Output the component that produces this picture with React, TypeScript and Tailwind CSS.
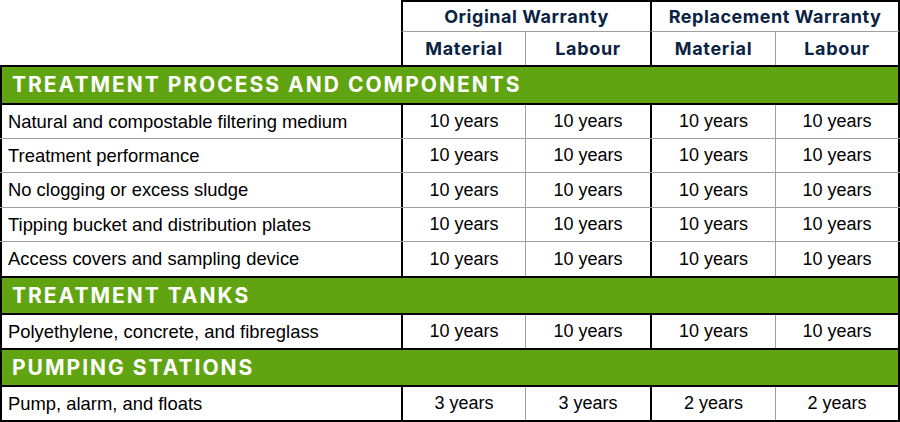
import React from "react";

const body = { fontFamily: '"Liberation Sans", Arial, sans-serif' };
const head = { fontFamily: 'Inter, "Open Sans", sans-serif' };

function DataRow({ label, v, h, top, last }: { label: string; v: string[]; h: string; top: "black" | "gray"; last?: boolean }) {
  const t = top === "black" ? "border-t-2 border-t-black" : "border-t border-t-[#a0a0a0]";
  const b = last ? "border-b-2 border-b-black" : "";
  return (
    <div className={`flex w-[900px] ${h} ${t} ${b} text-[18px] text-black`} style={body}>
      <div className="w-[401px] border-l-2 border-l-black pl-[6px] flex items-center text-[18.4px]">{label}</div>
      <div className="w-[124px] border-l-2 border-l-black flex items-center justify-center">{v[0]}</div>
      <div className="w-[125px] border-l border-l-[#a0a0a0] flex items-center justify-center">{v[1]}</div>
      <div className="w-[125px] border-l-2 border-l-black flex items-center justify-center">{v[2]}</div>
      <div className="w-[125px] border-l border-l-[#a0a0a0] border-r-2 border-r-black flex items-center justify-center">{v[3]}</div>
    </div>
  );
}

function Section({ title, h }: { title: string; h: string }) {
  return (
    <div
      className={`w-[900px] ${h} border-t-2 border-t-black border-l-2 border-l-black border-r-2 border-r-black bg-[#60a511] flex items-center pl-[10px] text-white font-bold text-[21px] tracking-[2px]`}
      style={head}
    >
      {title}
    </div>
  );
}

const ten = ["10 years", "10 years", "10 years", "10 years"];

export default function App() {
  return (
    <div className="w-[900px] h-[422px] bg-white overflow-hidden">
      <div className="flex w-[900px] h-[31px] text-[#0b2343] font-bold text-[18px] tracking-[0.55px]" style={head}>
        <div className="w-[401px]" />
        <div className="w-[249px] border-t-2 border-t-black border-l-2 border-l-black flex items-center justify-center">
          Original Warranty
        </div>
        <div className="w-[250px] border-t-2 border-t-black border-l-2 border-l-black border-r-2 border-r-black flex items-center justify-center">
          Replacement Warranty
        </div>
      </div>
      <div className="flex w-[900px] h-[34px] text-[#0b2343] font-bold text-[18px] tracking-[0.7px]" style={head}>
        <div className="w-[401px]" />
        <div className="w-[124px] border-t border-t-[#a0a0a0] border-l-2 border-l-black flex items-center justify-center">Material</div>
        <div className="w-[125px] border-t border-t-[#a0a0a0] border-l border-l-[#a0a0a0] flex items-center justify-center">Labour</div>
        <div className="w-[125px] border-t border-t-[#a0a0a0] border-l-2 border-l-black flex items-center justify-center">Material</div>
        <div className="w-[125px] border-t border-t-[#a0a0a0] border-l border-l-[#a0a0a0] border-r-2 border-r-black flex items-center justify-center">Labour</div>
      </div>

      <Section title="TREATMENT PROCESS AND COMPONENTS" h="h-[38px]" />
      <DataRow label="Natural and compostable filtering medium" v={ten} h="h-[35px]" top="black" />
      <DataRow label="Treatment performance" v={ten} h="h-[34px]" top="gray" />
      <DataRow label="No clogging or excess sludge" v={ten} h="h-[35px]" top="gray" />
      <DataRow label="Tipping bucket and distribution plates" v={ten} h="h-[34px]" top="gray" />
      <DataRow label="Access covers and sampling device" v={ten} h="h-[35px]" top="gray" />

      <Section title="TREATMENT TANKS" h="h-[37px]" />
      <DataRow label="Polyethylene, concrete, and fibreglass" v={ten} h="h-[35px]" top="black" />

      <Section title="PUMPING STATIONS" h="h-[37px]" />
      <DataRow
        label="Pump, alarm, and floats"
        v={["3 years", "3 years", "2 years", "2 years"]}
        h="h-[37px]"
        top="black"
        last
      />
    </div>
  );
}
